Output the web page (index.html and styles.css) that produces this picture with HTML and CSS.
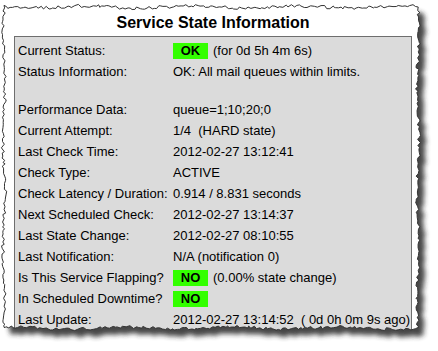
FILE: index.html
```html
<!DOCTYPE html>
<html lang="en">
<head>
    <meta charset="UTF-8">
    <title>Service State Information</title>
    <link rel="stylesheet" href="styles.css">
</head>
<body>
    <div class="page">
        <div class="panel">
            <div class="title">Service State Information</div>
            <div class="state-box">
                <div class="row">
                    <span class="label">Current Status:</span>
                    <span class="value"><span class="badge">OK</span><span>(for 0d 5h 4m 6s)</span></span>
                </div>
                <div class="row">
                    <span class="label">Status Information:</span>
                    <span class="value">OK: All mail queues within limits.</span>
                </div>
                <div class="spacer"></div>
                <div class="row">
                    <span class="label">Performance Data:</span>
                    <span class="value">queue=1;10;20;0</span>
                </div>
                <div class="row">
                    <span class="label">Current Attempt:</span>
                    <span class="value">1/4&nbsp; (HARD state)</span>
                </div>
                <div class="row">
                    <span class="label">Last Check Time:</span>
                    <span class="value">2012-02-27 13:12:41</span>
                </div>
                <div class="row">
                    <span class="label">Check Type:</span>
                    <span class="value">ACTIVE</span>
                </div>
                <div class="row">
                    <span class="label">Check Latency / Duration:</span>
                    <span class="value">0.914&nbsp;/&nbsp;8.831 seconds</span>
                </div>
                <div class="row">
                    <span class="label">Next Scheduled Check:</span>
                    <span class="value">2012-02-27 13:14:37</span>
                </div>
                <div class="row">
                    <span class="label">Last State Change:</span>
                    <span class="value">2012-02-27 08:10:55</span>
                </div>
                <div class="row">
                    <span class="label">Last Notification:</span>
                    <span class="value">N/A (notification 0)</span>
                </div>
                <div class="row">
                    <span class="label">Is This Service Flapping?</span>
                    <span class="value"><span class="badge">NO</span><span>(0.00% state change)</span></span>
                </div>
                <div class="row">
                    <span class="label">In Scheduled Downtime?</span>
                    <span class="value"><span class="badge">NO</span></span>
                </div>
                <div class="row">
                    <span class="label">Last Update:</span>
                    <span class="value">2012-02-27 13:14:52&nbsp; ( 0d 0h 0m 9s ago)</span>
                </div>
            </div>
        </div>

        <svg class="tear" width="438" height="351" viewBox="0 0 438 351">
            <defs>
                <filter id="soft" x="-10%" y="-10%" width="120%" height="120%">
                    <feGaussianBlur stdDeviation="2.6"/>
                </filter>
                <clipPath id="outside">
                    <path id="outsideClip" clip-rule="evenodd" d=""/>
                </clipPath>
            </defs>
            <path id="cover" fill="#fff" fill-rule="evenodd" d=""/>
            <g clip-path="url(#outside)">
                <path id="shadow" fill="#262626" opacity="0.85" filter="url(#soft)" transform="translate(6,7)" d=""/>
            </g>
            <path id="edge" fill="none" stroke="#333" stroke-width="1" d=""/>
        </svg>
    </div>
    <script>
        // torn paper outline, deterministic so every render looks the same
        let seed = 11;
        function rnd() {
            seed = (seed * 16807) % 2147483647;
            return seed / 2147483647;
        }

        function edge(pts, ax, ay, bx, by, nx, ny) {
            const len = Math.hypot(bx - ax, by - ay);
            let t = 0;
            while (t < len) {
                const f = t / len;
                const off = (rnd() - 0.5) * 3.2 + Math.sin(t / 17) * 1.1;
                pts.push([ax + (bx - ax) * f + nx * off, ay + (by - ay) * f + ny * off]);
                t += 1.2 + rnd() * 2.8;
            }
        }

        const pts = [];
        edge(pts, 4, 7, 418, 7, 0, 1);
        edge(pts, 418, 7, 418, 328, 1, 0);
        edge(pts, 418, 328, 4, 328, 0, 1);
        edge(pts, 4, 328, 4, 7, 1, 0);

        const torn = 'M' + pts.map(p => p[0].toFixed(1) + ' ' + p[1].toFixed(1)).join('L') + 'Z';
        const outer = 'M0 0H438V351H0Z';

        document.getElementById('outsideClip').setAttribute('d', outer + torn);
        document.getElementById('cover').setAttribute('d', outer + torn);
        document.getElementById('shadow').setAttribute('d', torn);
        document.getElementById('edge').setAttribute('d', torn);
    </script>
</body>
</html>
```

FILE: styles.css
```css
html, body {
    margin: 0;
    padding: 0;
    background-color: #fff;
    font-family: "Liberation Sans", Arial, sans-serif;
    color: #000;
}
.page {
    position: relative;
    width: 438px;
    height: 351px;
    overflow: hidden;
}
.panel {
    width: 398px;
    margin-left: 14px;
    padding-top: 13px;
}
.title {
    font-size: 16px;
    font-weight: bold;
    line-height: 20px;
    text-align: center;
    margin-bottom: 3px;
}
.state-box {
    background-color: #dbdbdb;
    border: 1px solid #6e6e6e;
    padding: 3px 3px 20px 3px;
    font-size: 13px;
}
.row {
    display: flex;
    align-items: center;
    height: 21px;
    white-space: nowrap;
}
.spacer {
    height: 17px;
}
.label {
    width: 155px;
    flex-shrink: 0;
}
.value {
    display: flex;
    align-items: center;
    gap: 5px;
}
.badge {
    display: inline-block;
    width: 35px;
    height: 16px;
    line-height: 16px;
    text-align: center;
    font-weight: bold;
    background-color: #33ff00;
}
.tear {
    position: absolute;
    top: 0;
    left: 0;
    pointer-events: none;
}
```
